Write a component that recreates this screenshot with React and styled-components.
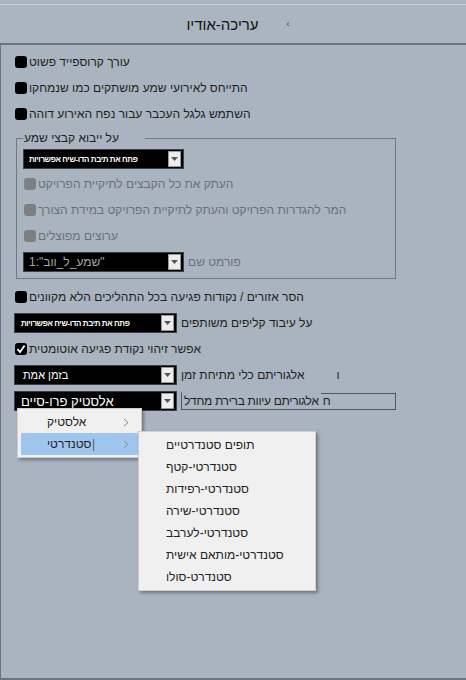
import React from 'react';
import styled, { createGlobalStyle } from 'styled-components';

const GlobalStyle = createGlobalStyle`
  body {
    margin: 0;
    background: #a9b4c0;
    font-family: 'Liberation Sans', Arial, sans-serif;
  }
`;

const subItems = [
  'תופים סטנדרטיים',
  'סטנדרטי-קטף',
  'סטנדרטי-רפידות',
  'סטנדרטי-שירה',
  'סטנדרטי-לערבב',
  'סטנדרטי-מותאם אישית',
  'סטנדרט-סולו',
];

const Check = ({ checked, disabled }) => (
  <Box disabled={disabled}>
    {checked && (
      <svg width="10" height="10" viewBox="0 0 10 10">
        <polyline points="1.5,5.2 4,8 8.6,1.5" fill="none" stroke="#fff" strokeWidth="1.8" />
      </svg>
    )}
  </Box>
);

const Dropdown = ({ width, size, pad, dim, ltr, children }) => (
  <Select width={width} size={size} pad={pad} dim={dim}>
    <SelectText dir={ltr ? 'ltr' : 'rtl'}>{children}</SelectText>
    <ArrowButton>
      <svg width="7" height="4" viewBox="0 0 7 4">
        <polygon points="0,0 7,0 3.5,4" fill="#555" />
      </svg>
    </ArrowButton>
  </Select>
);

const Chevron = () => (
  <svg width="6" height="9" viewBox="0 0 6 9">
    <polyline points="1,1 5,4.5 1,8" fill="none" stroke="#8a8a8a" strokeWidth="1" />
  </svg>
);

const App = () => {
  return (
    <Window>
      <GlobalStyle />
      <TitleBar>
        <Title>עריכה-אודיו</Title>
        <TitleMark>‹</TitleMark>
      </TitleBar>
      <Panel>
        <CheckRow>
          <Check />
          <Label>עורך קרוספייד פשוט</Label>
        </CheckRow>
        <CheckRow>
          <Check />
          <Label>התייחס לאירועי שמע מושתקים כמו שנמחקו</Label>
        </CheckRow>
        <CheckRow>
          <Check />
          <Label>השתמש גלגל העכבר עבור נפח האירוע דוהה</Label>
        </CheckRow>

        <Group>
          <Legend>על ייבוא קבצי שמע</Legend>
          <Dropdown width={161} size={8} pad={5}>פתח את תיבת הדו-שיח אפשרויות</Dropdown>
          <CheckRow disabled inset first>
            <Check disabled />
            <Label>העתק את כל הקבצים לתיקיית הפרויקט</Label>
          </CheckRow>
          <CheckRow disabled inset>
            <Check disabled />
            <Label>המר להגדרות הפרויקט והעתק לתיקיית הפרויקט במידת הצורך</Label>
          </CheckRow>
          <CheckRow disabled inset>
            <Check disabled />
            <Label>ערוצים מפוצלים</Label>
          </CheckRow>
          <SelectRow top={3}>
            <Dropdown width={161} size={12} pad={5} dim ltr>1:"שמע_ל_ווב"</Dropdown>
            <Label muted>פורמט שם</Label>
          </SelectRow>
        </Group>

        <CheckRow top={5}>
          <Check />
          <Label>הסר אזורים / נקודות פגיעה בכל התהליכים הלא מקוונים</Label>
        </CheckRow>
        <SelectRow top={3} outer>
          <Dropdown width={163} size={8} pad={6}>פתח את תיבת הדו-שיח אפשרויות</Dropdown>
          <Label>על עיבוד קליפים משותפים</Label>
        </SelectRow>
        <CheckRow top={3}>
          <Check checked />
          <Label>אפשר זיהוי נקודת פגיעה אוטומטית</Label>
        </CheckRow>
        <SelectRow top={3} outer>
          <Dropdown width={163} size={11} pad={8}>בזמן אמת</Dropdown>
          <Label>אלגוריתם כלי מתיחת זמן</Label>
          <Stray>ו</Stray>
        </SelectRow>
        <SelectRow top={6} outer>
          <Dropdown width={163} size={13} pad={6}>אלסטיק פרו-סיים</Dropdown>
          <FieldBox>
            <FieldLabel>אלגוריתם עיוות ברירת מחדל</FieldLabel>
            <FieldChar>ח</FieldChar>
          </FieldBox>
        </SelectRow>

        <Menu>
          <MenuItem>
            <MenuText>אלסטיק</MenuText>
            <Chevron />
          </MenuItem>
          <MenuItem active>
            <MenuText>סטנדרטי</MenuText>
            <Caret>|</Caret>
            <Chevron />
          </MenuItem>
        </Menu>

        <SubMenu>
          {subItems.map((item) => (
            <SubItem key={item}>{item}</SubItem>
          ))}
        </SubMenu>
      </Panel>
    </Window>
  );
};

const Window = styled.div`
  width: 466px;
  height: 680px;
  display: flex;
  flex-direction: column;
  background: #a9b4c0;
  box-sizing: border-box;
`;

const TitleBar = styled.div`
  height: 38px;
  margin-top: 4px;
  border-top: 1px solid #c4ccd5;
  border-bottom: 2px solid #6b7481;
  background: #abb5c1;
  display: flex;
  align-items: center;
  justify-content: center;
  gap: 28px;
  padding-left: 10px;
`;

const Title = styled.div`
  font-size: 15px;
  color: #111;
`;

const TitleMark = styled.span`
  font-size: 9px;
  color: #333;
`;

const Panel = styled.div`
  position: relative;
  flex: 1;
  display: flex;
  flex-direction: column;
  align-items: flex-start;
  padding: 4px 0 0 14px;
  border-left: 1px solid #6b7481;
  border-bottom: 2px solid #6b7481;
`;

const CheckRow = styled.div`
  display: flex;
  align-items: center;
  gap: 2px;
  height: 26px;
  margin-top: ${(p) => (p.first ? 2 : p.top || 0)}px;
  padding-left: ${(p) => (p.inset ? 1 : 0)}px;
  color: ${(p) => (p.disabled ? '#6a7079' : '#1e1e1e')};
`;

const Box = styled.span`
  width: 12px;
  height: 12px;
  border-radius: 3px;
  background: ${(p) => (p.disabled ? '#7d7f82' : '#000')};
  display: flex;
  align-items: center;
  justify-content: center;
  flex-shrink: 0;
`;

const Label = styled.span`
  font-size: 12px;
  white-space: nowrap;
  color: ${(p) => (p.muted ? '#6a7079' : 'inherit')};
`;

const Group = styled.fieldset`
  margin: 4px 0 0 1px;
  width: 380px;
  box-sizing: border-box;
  border: 1px solid #707986;
  padding: 4px 0 6px 6px;
  display: flex;
  flex-direction: column;
  align-items: flex-start;
  color: #1e1e1e;
`;

const Legend = styled.legend`
  font-size: 12px;
  line-height: 14px;
  padding: 0 26px 0 1px;
  margin-left: 0;
  color: #1e1e1e;
`;

const SelectRow = styled.div`
  display: flex;
  align-items: center;
  gap: 4px;
  margin-top: ${(p) => p.top || 0}px;
  margin-left: ${(p) => (p.outer ? -1 : 0)}px;
  color: #1e1e1e;
`;

const Select = styled.div`
  width: ${(p) => p.width}px;
  height: 20px;
  box-sizing: border-box;
  background: #000;
  border: 1px solid #3c3f44;
  display: flex;
  align-items: center;
  justify-content: space-between;
  padding: 0 2px 0 ${(p) => p.pad}px;
  color: ${(p) => (p.dim ? '#a7a7a7' : '#fff')};
  font-size: ${(p) => p.size}px;
  font-weight: ${(p) => (p.size < 10 ? 'bold' : 'normal')};
  letter-spacing: ${(p) => (p.size < 10 ? '-0.4px' : 'normal')};
`;

const SelectText = styled.span`
  white-space: nowrap;
`;

const ArrowButton = styled.span`
  width: 11px;
  height: 14px;
  background: #ececec;
  border: 1px solid #9a9a9a;
  display: flex;
  align-items: center;
  justify-content: center;
`;

const Stray = styled.span`
  font-size: 12px;
  margin-left: 28px;
`;

const FieldBox = styled.div`
  width: 215px;
  height: 18px;
  box-sizing: border-box;
  border: 1px solid #4e5663;
  border-top-color: transparent;
  background: linear-gradient(#4e5663, #4e5663) right top / 74px 1px no-repeat;
  display: flex;
  align-items: center;
  justify-content: flex-start;
  padding-left: 2px;
`;

const FieldLabel = styled.span`
  font-size: 12px;
  letter-spacing: -0.3px;
  white-space: nowrap;
`;

const FieldChar = styled.span`
  font-size: 12px;
  margin-left: 4px;
`;

const Menu = styled.div`
  position: absolute;
  top: 363px;
  left: 16px;
  width: 125px;
  box-sizing: border-box;
  padding: 2px 3px 2px;
  background: #f0f0f0;
  border: 1px solid #cfcfcf;
  box-shadow: 2px 2px 3px rgba(0, 0, 0, 0.35);
`;

const MenuItem = styled.div`
  display: flex;
  align-items: center;
  height: 22px;
  padding: 0 9px 0 26px;
  background: ${(p) => (p.active ? '#9fc6ef' : 'transparent')};
`;

const MenuText = styled.span`
  font-size: 12px;
  color: #222;
  flex: 1;
`;

const Caret = styled.span`
  font-size: 12px;
  color: #555;
  margin-right: 28px;
`;

const SubMenu = styled.div`
  position: absolute;
  top: 386px;
  left: 137px;
  width: 178px;
  box-sizing: border-box;
  padding: 2px 0 2px 27px;
  background: #f0f0f0;
  border: 1px solid #cfcfcf;
  box-shadow: 2px 2px 3px rgba(0, 0, 0, 0.35);
`;

const SubItem = styled.div`
  height: 22px;
  display: flex;
  align-items: center;
  font-size: 12px;
  color: #222;
`;

export default App;
